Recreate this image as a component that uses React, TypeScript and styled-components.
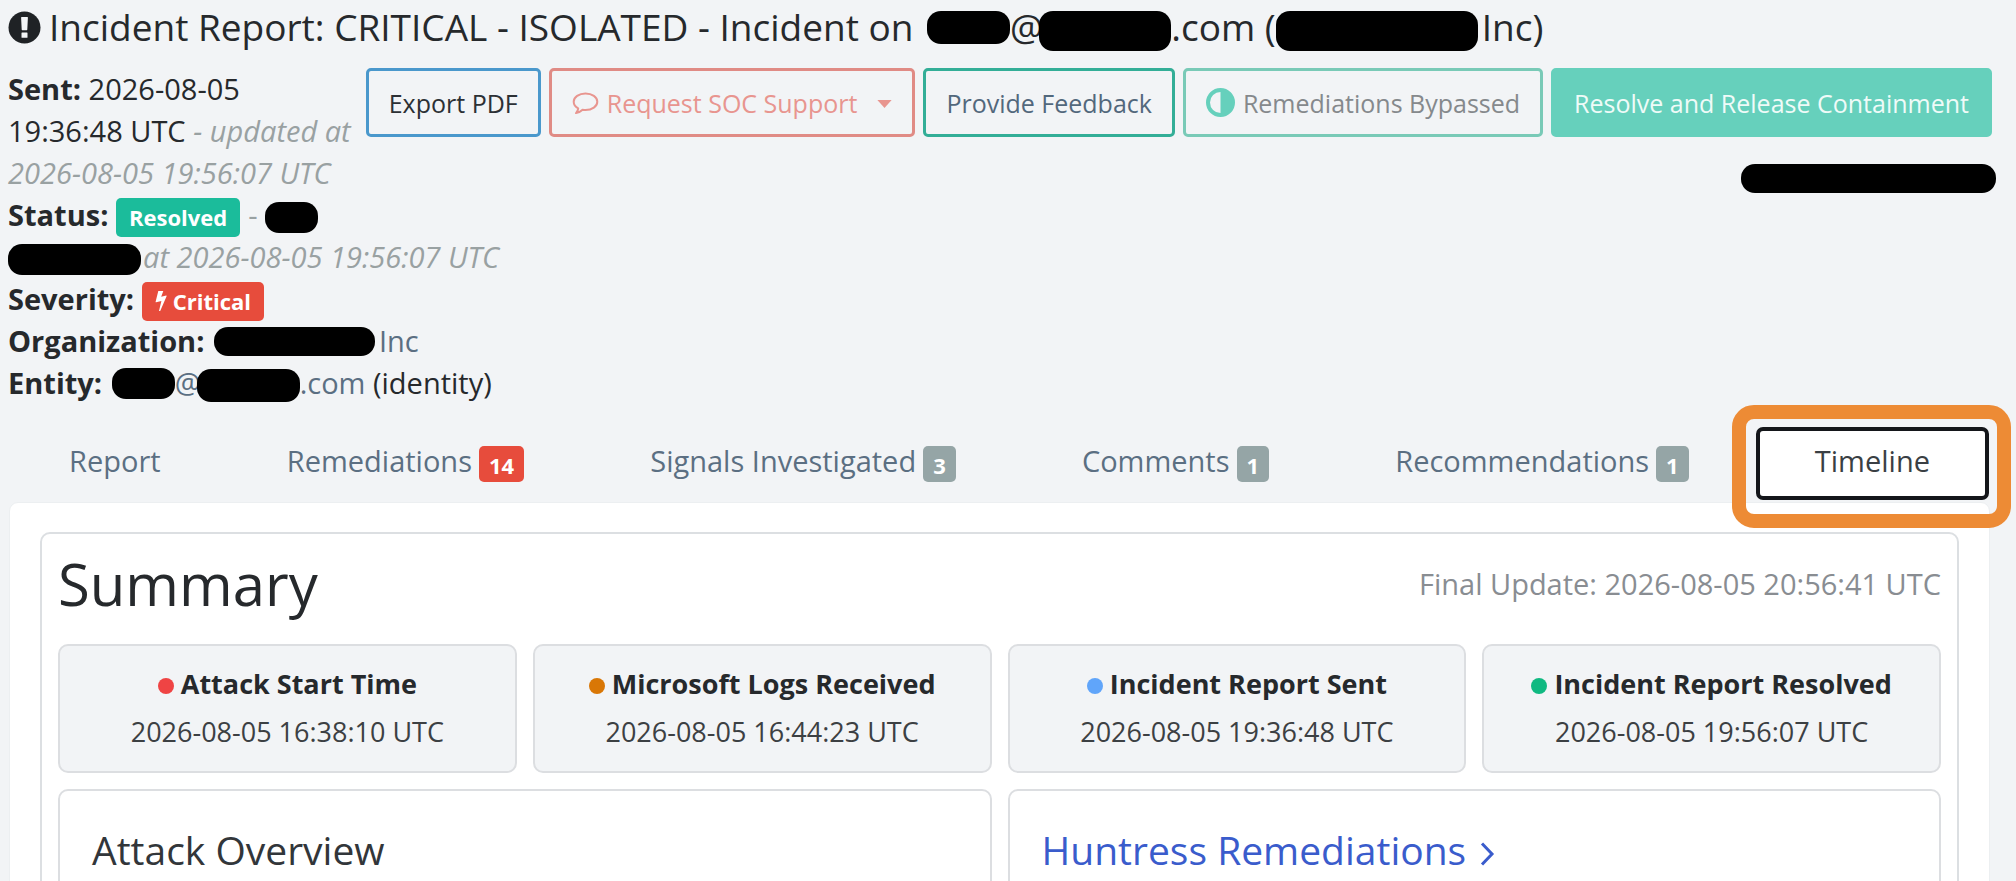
import React from "react";
import styled, { createGlobalStyle, css } from "styled-components";

const GlobalStyle = createGlobalStyle`
  *, *::before, *::after { box-sizing: border-box; }
  body {
    margin: 0;
    background: #f2f4f6;
    color: #26292c;
    font-family: "Open Sans", "Noto Sans", "Liberation Sans", sans-serif;
    font-size: 29px;
    line-height: 42px;
    overflow-x: hidden;
  }
`;

const Page = styled.main`
  height: 100vh;
  overflow: hidden;
`;

const Title = styled.h1`
  display: flex;
  align-items: center;
  margin: 0;
  padding: 0 8px;
  height: 54px;
  font-size: 37px;
  line-height: 50px;
  font-weight: 400;
  white-space: pre;
  svg { flex: none; margin-right: 8px; }
`;

const Redacted = styled.span<{ $w: number; $h?: number; $drop?: number; $before?: number; $after?: number }>`
  flex: none;
  width: ${p => p.$w}px;
  height: ${p => p.$h ?? 31}px;
  margin: ${p => p.$drop ?? 0}px ${p => p.$after ?? 0}px 0 ${p => p.$before ?? 0}px;
  border-radius: 14px;
  background: #000;
`;

const Header = styled.header`
  display: flex;
  align-items: flex-start;
  padding: 14px 24px 0 8px;
`;

const Meta = styled.div`
  flex: 1 1 0;
  min-width: 0;
`;

const Line = styled.div`
  display: flex;
  align-items: center;
  height: 42px;
  white-space: pre;
`;

const Strong = styled.strong`
  font-weight: 700;
`;

const Muted = styled.em<{ $upright?: boolean }>`
  color: #99a1a2;
  font-style: ${p => (p.$upright ? "normal" : "italic")};
`;

const MetaLink = styled.a`
  color: #5b6f82;
  text-decoration: none;
`;

const Label = styled.span<{ $tone: "green" | "red" }>`
  display: flex;
  align-items: center;
  gap: 6px;
  height: 39px;
  margin: 4px 8px 0 0;
  padding: 0 13px;
  border-radius: 5px;
  background: ${p => (p.$tone === "green" ? "#1bbc9b" : "#e74c3c")};
  color: #fff;
  font-size: 22px;
  font-weight: 700;
`;

const Side = styled.div`
  display: flex;
  flex: none;
  flex-direction: column;
  align-items: flex-end;
  gap: 27px;
`;

const Actions = styled.div`
  display: flex;
  gap: 8px;
`;

type Tone = "blue" | "red" | "teal" | "tealSoft" | "solid";
const tones = {
  blue: css`border-color: #4a98cc; color: #2c3035;`,
  red: css`border-color: #e08b85; color: #e8958f;`,
  teal: css`border-color: #33ae97; color: #52687c;`,
  tealSoft: css`border-color: #79cab7; color: #85898c;`,
  solid: css`border-color: #66d0bc; background: #66d0bc; color: #effbf8;`,
};

const Button = styled.button<{ $tone: Tone }>`
  display: flex;
  align-items: center;
  height: 69px;
  padding: 0 20px;
  border: 3px solid;
  border-radius: 5px;
  background: transparent;
  font: inherit;
  font-size: 25px;
  line-height: 36px;
  white-space: nowrap;
  ${p => tones[p.$tone]}
  svg { flex: none; }
`;

const Tabs = styled.nav`
  display: flex;
  gap: 8px;
  margin-top: 23px;
  padding: 0 27px 0 10px;
`;

const Tab = styled.a<{ $active?: boolean }>`
  position: relative;
  display: flex;
  flex: 1 1 auto;
  align-items: center;
  justify-content: center;
  gap: 7px;
  height: 73px;
  margin-bottom: 2px;
  border: 4px solid ${p => (p.$active ? "#14161a" : "transparent")};
  border-radius: 7px;
  background: ${p => (p.$active ? "#fff" : "transparent")};
  color: ${p => (p.$active ? "#3a3f44" : "#5b6f82")};
  padding-bottom: 6px;
  text-decoration: none;
  white-space: nowrap;
`;

/* Orange frame that marks the open tab */
const Highlight = styled.span`
  position: absolute;
  inset: -26px -26px -32px -28px;
  border: 14px solid #ed8b35;
  border-radius: 22px;
  z-index: 2;
`;

const Count = styled.span<{ $alert?: boolean }>`
  height: 36px;
  margin-top: 6px;
  padding: 0 10px;
  border-radius: 5px;
  background: ${p => (p.$alert ? "#e74c3c" : "#95a5a6")};
  color: #fff;
  font-size: 22px;
  line-height: 38px;
  font-weight: 700;
`;

const Sheet = styled.section`
  margin: 0 26px 0 9px;
  padding: 29px 30px;
  border: 1px solid #eceff1;
  border-radius: 9px;
  background: #fff;
`;

const Frame = styled.div`
  padding: 16px;
  min-height: 500px;
  border: 2px solid #dcdfe2;
  border-radius: 10px;
`;

const SummaryHead = styled.div`
  display: flex;
  align-items: center;
  justify-content: space-between;
  height: 68px;
  margin-bottom: 26px;
`;

const SummaryTitle = styled.h2`
  margin: 0;
  font-size: 58px;
  line-height: 68px;
  font-weight: 400;
`;

const Updated = styled.span`
  color: #898d92;
`;

const Grid = styled.div<{ $cols: number }>`
  display: grid;
  grid-template-columns: repeat(${p => p.$cols}, 1fr);
  gap: 16px;
  margin-bottom: 16px;
`;

const Milestone = styled.div`
  height: 129px;
  padding: 14px 16px;
  border: 2px solid #dcdee1;
  border-radius: 10px;
  background: #f2f4f6;
  font-size: 27px;
  line-height: 48px;
  text-align: center;
`;

const MilestoneName = styled.div`
  display: flex;
  align-items: center;
  justify-content: center;
  gap: 7px;
  font-weight: 700;
`;

const Dot = styled.i<{ $color: string }>`
  width: 16px;
  height: 16px;
  margin-top: 4px;
  border-radius: 50%;
  background: ${p => p.$color};
`;

const Time = styled.time`
  display: block;
  color: #3c4043;
`;

const Panel = styled.article`
  min-height: 160px;
  padding: 32px;
  border: 2px solid #dcdee1;
  border-radius: 10px;
`;

const PanelTitle = styled.h3`
  margin: 0;
  color: #32363a;
  font-size: 39px;
  line-height: 54px;
  font-weight: 400;
`;

const PanelLink = styled.a`
  display: flex;
  align-items: center;
  gap: 14px;
  color: #3a5ccc;
  text-decoration: none;
  svg { margin-top: 8px; }
`;

const AlertIcon = () => (
  <svg width="33" height="33" viewBox="0 0 33 33" aria-hidden="true">
    <circle cx="16.5" cy="16.5" r="16" fill="#1f2225" />
    <path d="M13.6 6h5.800q.5 0 .5.6l-.6 12q0 .6-.6.6h-4.400q-.6 0-.6-.6l-.6-12q0-.6.5-.6zM14 21.600h5q.5 0 .5.6v4q0 .6-.5.6h-5q-.5 0-.5-.6v-4q0-.6.5-.6z" fill="#f2f4f6" />
  </svg>
);

const CommentIcon = () => (
  <svg width="27" height="24" viewBox="0 0 26 24" fill="none" stroke="currentColor" strokeWidth="2" strokeLinejoin="round" aria-hidden="true">
    <path d="M13 2.5c6.600 0 11.800 3.700 11.800 8.300s-5.200 8.300-11.800 8.300c-1 0-2-.1-2.900-.3-1.900 1.800-4.200 3-6.600 3.300 1.300-1.300 2.100-2.800 2.200-4.700C2.900 15.900 1.200 13.500 1.200 10.800 1.200 6.200 6.400 2.500 13 2.500z" />
  </svg>
);

const AdjustIcon = () => (
  <svg width="29" height="29" viewBox="0 0 29 29" aria-hidden="true">
    <circle cx="14.500" cy="14.500" r="12.500" fill="none" stroke="#66d0bc" strokeWidth="4" />
    <path d="M14.500 3a11.500 11.500 0 0 1 0 23z" fill="#66d0bc" />
  </svg>
);

const BoltIcon = () => (
  <svg width="12" height="22" viewBox="0 0 12 22" fill="#fff" aria-hidden="true">
    <path d="M3.300 1h5L6.200 6.700l5-1.200q.6 0 .4.7L5.200 21H4l2.400-10-5.300 1.300q-.6 0-.5-.6z" />
  </svg>
);

const CaretIcon = () => (
  <svg width="15" height="8" viewBox="0 0 16 9" fill="currentColor" aria-hidden="true">
    <path d="M0 0h16L8 9z" />
  </svg>
);

const ChevronIcon = () => (
  <svg width="15" height="24" viewBox="0 0 15 24" fill="none" stroke="currentColor" strokeWidth="3" aria-hidden="true">
    <path d="M2 1.500L12 12 2 22.500" />
  </svg>
);

const ButtonIconText = styled.span`
  display: flex;
  align-items: center;
  gap: 8px;
`;

const CaretSlot = styled.span`
  display: flex;
  margin: 2px 0 0 20px;
`;

const tabs: { name: string; count?: number; alert?: boolean; active?: boolean }[] = [
  { name: "Report" },
  { name: "Remediations", count: 14, alert: true },
  { name: "Signals Investigated", count: 3 },
  { name: "Comments", count: 1 },
  { name: "Recommendations", count: 1 },
  { name: "Timeline", active: true },
];

const milestones = [
  { name: "Attack Start Time", time: "2026-08-05 16:38:10 UTC", color: "#ef4444" },
  { name: "Microsoft Logs Received", time: "2026-08-05 16:44:23 UTC", color: "#d97706" },
  { name: "Incident Report Sent", time: "2026-08-05 19:36:48 UTC", color: "#60a5fa" },
  { name: "Incident Report Resolved", time: "2026-08-05 19:56:07 UTC", color: "#10b981" },
];

export default function App() {
  return (
    <Page>
      <GlobalStyle />
      <Title>
        <AlertIcon />
        <span>Incident Report: CRITICAL - ISOLATED - Incident on </span>
        <Redacted $w={83} $h={33} $before={4} />
        <span>@</span>
        <Redacted $w={132} $h={40} $drop={8} $before={-4} />
        <span>.com (</span>
        <Redacted $w={202} $h={40} $drop={8} $after={4} />
        <span>Inc)</span>
      </Title>

      <Header>
        <Meta>
          <Line><Strong>Sent:</Strong> 2026-08-05</Line>
          <Line>19:36:48 UTC <Muted>- updated at</Muted></Line>
          <Line><Muted>2026-08-05 19:56:07 UTC</Muted></Line>
          <Line>
            <Strong>Status: </Strong>
            <Label $tone="green">Resolved</Label>
            <Muted $upright>- </Muted>
            <Redacted $w={53} $drop={4} />
          </Line>
          <Line>
            <Redacted $w={133} $drop={4} $after={2} />
            <Muted>at 2026-08-05 19:56:07 UTC</Muted>
          </Line>
          <Line>
            <Strong>Severity: </Strong>
            <Label $tone="red"><BoltIcon />Critical</Label>
          </Line>
          <Line>
            <Strong>Organization: </Strong>
            <Redacted $w={161} $h={29} $before={2} $after={4} />
            <MetaLink href="#organization">Inc</MetaLink>
          </Line>
          <Line>
            <Strong>Entity: </Strong>
            <Redacted $w={63} $before={2} />
            <MetaLink href="#entity">@</MetaLink>
            <Redacted $w={103} $h={33} $drop={4} $before={-4} />
            <MetaLink href="#entity">.com</MetaLink>
            <span> (identity)</span>
          </Line>
        </Meta>
        <Side>
          <Actions>
            <Button $tone="blue">Export PDF</Button>
            <Button $tone="red">
              <ButtonIconText><CommentIcon />Request SOC Support</ButtonIconText>
              <CaretSlot><CaretIcon /></CaretSlot>
            </Button>
            <Button $tone="teal">Provide Feedback</Button>
            <Button $tone="tealSoft">
              <ButtonIconText><AdjustIcon />Remediations Bypassed</ButtonIconText>
            </Button>
            <Button $tone="solid">Resolve and Release Containment</Button>
          </Actions>
          <Redacted $w={255} $h={29} $after={-4} />
        </Side>
      </Header>

      <Tabs>
        {tabs.map(t => (
          <Tab key={t.name} href={`#${t.name}`} $active={t.active}>
            {t.name}
            {t.count !== undefined && <Count $alert={t.alert}>{t.count}</Count>}
            {t.active && <Highlight />}
          </Tab>
        ))}
      </Tabs>

      <Sheet>
        <Frame>
          <SummaryHead>
            <SummaryTitle>Summary</SummaryTitle>
            <Updated>Final Update: 2026-08-05 20:56:41 UTC</Updated>
          </SummaryHead>
          <Grid $cols={4}>
            {milestones.map(m => (
              <Milestone key={m.name}>
                <MilestoneName><Dot $color={m.color} />{m.name}</MilestoneName>
                <Time>{m.time}</Time>
              </Milestone>
            ))}
          </Grid>
          <Grid $cols={2}>
            <Panel><PanelTitle>Attack Overview</PanelTitle></Panel>
            <Panel>
              <PanelTitle>
                <PanelLink href="#remediations">Huntress Remediations<ChevronIcon /></PanelLink>
              </PanelTitle>
            </Panel>
          </Grid>
        </Frame>
      </Sheet>
    </Page>
  );
}
